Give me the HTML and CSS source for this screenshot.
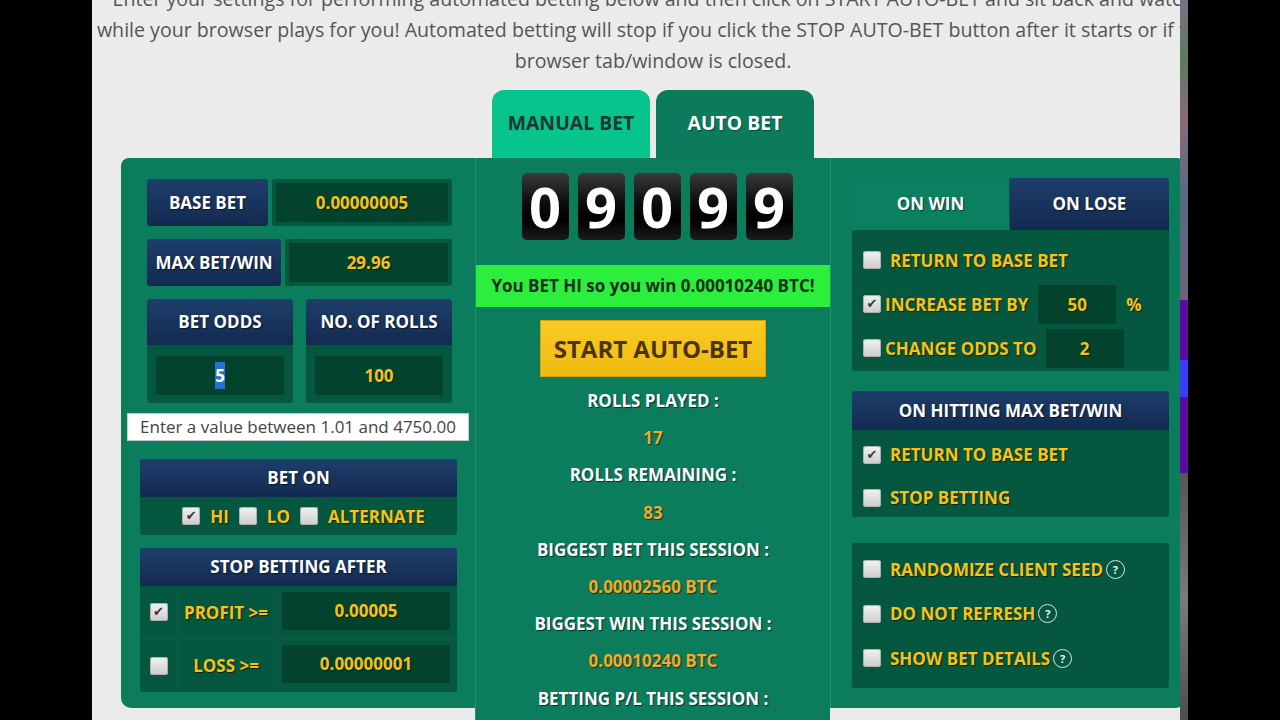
FILE: index.html
```html
<!DOCTYPE html>
<html>
<head>
    <title>Auto Bet</title>
    <link rel="stylesheet" href="styles.css">
</head>
<body>
    <div class="screen">
        <div class="frame">
            <div class="page">
                <p class="intro">
                    Enter your settings for performing automated betting below and then click on START AUTO-BET and sit back and watch<br>
                    while your browser plays for you! Automated betting will stop if you click the STOP AUTO-BET button after it starts or if the<br>
                    browser tab/window is closed.
                </p>

                <div class="tabs">
                    <div class="tab tab-manual">MANUAL BET</div>
                    <div class="tab tab-auto">AUTO BET</div>
                </div>

                <div class="board">
                    <!-- left: bet settings -->
                    <div class="col col-left">
                        <div class="field-row">
                            <div class="label-box base-label">BASE BET</div>
                            <div class="value-box"><div class="value">0.00000005</div></div>
                        </div>
                        <div class="field-row">
                            <div class="label-box max-label">MAX BET/WIN</div>
                            <div class="value-box"><div class="value">29.96</div></div>
                        </div>
                        <div class="field-row split-row">
                            <div class="split-box">
                                <div class="label-box">BET ODDS</div>
                                <div class="split-body"><div class="value"><span class="selected">5</span></div></div>
                            </div>
                            <div class="split-box">
                                <div class="label-box">NO. OF ROLLS</div>
                                <div class="split-body"><div class="value">100</div></div>
                            </div>
                        </div>
                        <div class="tooltip">Enter a value between 1.01 and 4750.00</div>

                        <div class="block bet-on">
                            <div class="block-head">BET ON</div>
                            <div class="bet-on-body">
                                <span class="check on"></span><span class="opt">HI</span>
                                <span class="check"></span><span class="opt">LO</span>
                                <span class="check"></span><span class="opt">ALTERNATE</span>
                            </div>
                        </div>

                        <div class="block stop-after">
                            <div class="block-head">STOP BETTING AFTER</div>
                            <div class="stop-row first">
                                <div class="stop-check"><span class="check on"></span></div>
                                <div class="stop-label">PROFIT &gt;=</div>
                                <div class="stop-input"><div class="value">0.00005</div></div>
                            </div>
                            <div class="stop-row">
                                <div class="stop-check"><span class="check"></span></div>
                                <div class="stop-label">LOSS &gt;=</div>
                                <div class="stop-input"><div class="value">0.00000001</div></div>
                            </div>
                        </div>
                    </div>

                    <!-- center: roll counter and stats -->
                    <div class="col col-center">
                        <div class="counter">
                            <span class="digit">0</span>
                            <span class="digit">9</span>
                            <span class="digit">0</span>
                            <span class="digit">9</span>
                            <span class="digit">9</span>
                        </div>
                        <div class="result">You BET HI so you win 0.00010240 BTC!</div>
                        <div class="start-btn">START AUTO-BET</div>
                        <div class="stats">
                            <div class="stat-label">ROLLS PLAYED :</div>
                            <div class="stat-value">17</div>
                            <div class="stat-label">ROLLS REMAINING :</div>
                            <div class="stat-value">83</div>
                            <div class="stat-label">BIGGEST BET THIS SESSION :</div>
                            <div class="stat-value">0.00002560 BTC</div>
                            <div class="stat-label">BIGGEST WIN THIS SESSION :</div>
                            <div class="stat-value">0.00010240 BTC</div>
                            <div class="stat-label">BETTING P/L THIS SESSION :</div>
                        </div>
                    </div>

                    <!-- right: win / lose behaviour -->
                    <div class="col col-right">
                        <div class="block win-lose">
                            <div class="wl-tabs">
                                <div class="wl-tab wl-active">ON WIN</div>
                                <div class="wl-tab">ON LOSE</div>
                            </div>
                            <div class="wl-body">
                                <div class="opt-row"><span class="check"></span><span class="opt">RETURN TO BASE BET</span></div>
                                <div class="opt-row tight"><span class="check on"></span><span class="opt">INCREASE BET BY</span><span class="small-input">50</span><span class="opt pct">%</span></div>
                                <div class="opt-row tight"><span class="check"></span><span class="opt">CHANGE ODDS TO</span><span class="small-input odds-input">2</span></div>
                            </div>
                        </div>

                        <div class="block max-hit">
                            <div class="block-head">ON HITTING MAX BET/WIN</div>
                            <div class="max-body">
                                <div class="opt-row short"><span class="check on"></span><span class="opt">RETURN TO BASE BET</span></div>
                                <div class="opt-row short"><span class="check"></span><span class="opt">STOP BETTING</span></div>
                            </div>
                        </div>

                        <div class="block extras">
                            <div class="opt-row"><span class="check"></span><span class="opt">RANDOMIZE CLIENT SEED</span><span class="help">?</span></div>
                            <div class="opt-row"><span class="check"></span><span class="opt">DO NOT REFRESH</span><span class="help">?</span></div>
                            <div class="opt-row"><span class="check"></span><span class="opt">SHOW BET DETAILS</span><span class="help">?</span></div>
                        </div>
                    </div>
                </div>
            </div>
        </div>
        <div class="noise"></div>
    </div>
</body>
</html>
```

FILE: styles.css
```css
body {
    margin: 0;
    padding: 0;
    background-color: #000000;
    font-family: "Open Sans", "Liberation Sans", sans-serif;
}

.screen {
    display: flex;
    height: 720px;
    padding-left: 92px;
    overflow: hidden;
}

.frame {
    width: 1088px;
    height: 720px;
    overflow: hidden;
    background-color: #ebebeb;
}

.page {
    width: 1122px;
    margin-top: -17px;
}

.intro {
    margin: 0;
    text-align: center;
    white-space: nowrap;
    font-size: 19.6px;
    line-height: 31px;
    color: #555555;
}

.tabs {
    display: flex;
    justify-content: center;
    gap: 6px;
    margin-top: 14px;
}

.tab {
    width: 158px;
    height: 68px;
    line-height: 66px;
    text-align: center;
    border-radius: 12px 12px 0 0;
    font-size: 19.4px;
    font-weight: bold;
}

.tab-manual {
    background-color: #07c48d;
    color: #173a2c;
}

.tab-auto {
    background-color: #0b7b5b;
    color: #ffffff;
    text-shadow: 1px 1px 1px rgba(0, 0, 0, 0.4);
}

.board {
    display: flex;
    align-items: flex-start;
    margin-left: 29px;
    width: 1064px;
}

.col {
    background-color: #0b7c5c;
    box-sizing: border-box;
}

.col-left {
    width: 354px;
    height: 550px;
    padding-top: 21px;
    border-radius: 8px 0 0 10px;
}

.col-center {
    width: 355px;
    height: 600px;
    padding-top: 15px;
    border-left: 1px solid #1f9372;
}

.col-right {
    width: 355px;
    height: 550px;
    padding: 20px 0 0 21px;
    border-left: 1px solid #1f9372;
    border-radius: 0 8px 10px 0;
}

/* boxes */
.label-box {
    background: linear-gradient(#1e3e6b, #132a50);
    color: #ffffff;
    font-size: 17px;
    font-weight: bold;
    text-align: center;
    text-shadow: 1px 1px 1px rgba(0, 0, 0, 0.6);
    border-radius: 3px;
}

.value {
    background-color: #03432e;
    color: #f4c11f;
    font-size: 17px;
    font-weight: bold;
    text-align: center;
    text-shadow: 1px 1px 1px rgba(0, 0, 0, 0.5);
    border-radius: 2px;
}

.field-row {
    display: flex;
    gap: 4px;
    width: 305px;
    height: 47px;
    margin-left: 26px;
    margin-bottom: 13px;
}

.field-row .label-box {
    line-height: 47px;
}

.base-label {
    width: 121px;
}

.max-label {
    width: 134px;
}

.value-box {
    flex: 1;
    padding: 4px;
    background-color: #06573f;
    border-radius: 3px;
}

.value-box .value {
    line-height: 39px;
}

.split-row {
    height: 104px;
    gap: 13px;
    margin-bottom: 10px;
}

.split-box {
    width: 146px;
    border-radius: 3px;
    overflow: hidden;
}

.split-box .label-box {
    height: 46px;
    line-height: 46px;
    border-radius: 3px 3px 0 0;
}

.split-body {
    height: 58px;
    padding: 11px 9px 8px;
    box-sizing: border-box;
    background-color: #06573f;
}

.split-body .value {
    line-height: 39px;
}

.selected {
    background-color: #2b6fd6;
    color: #ffffff;
    text-shadow: none;
    padding: 2px 0;
}

.tooltip {
    width: 342px;
    height: 28px;
    box-sizing: border-box;
    margin-left: 6px;
    margin-bottom: 18px;
    background-color: #ffffff;
    border: 1px solid #c9c9c9;
    font-size: 17px;
    line-height: 26px;
    text-align: center;
    color: #444444;
}

.block {
    width: 317px;
    background-color: #06573f;
    border-radius: 3px;
    overflow: hidden;
}

.col-left .block {
    margin-left: 19px;
    margin-bottom: 13px;
}

.block-head {
    height: 38px;
    line-height: 38px;
    background: linear-gradient(#1e3e6b, #132a50);
    color: #ffffff;
    font-size: 17px;
    font-weight: bold;
    text-align: center;
    text-shadow: 1px 1px 1px rgba(0, 0, 0, 0.6);
}

.check {
    display: inline-flex;
    align-items: center;
    justify-content: center;
    flex: none;
    width: 18px;
    height: 18px;
    border-radius: 3px;
    background: linear-gradient(#f2f2f2, #cdcdcd);
    box-shadow: inset 0 0 0 1px #b0b0b0;
    color: #3a3a3a;
    font-size: 13px;
    line-height: 18px;
}

.check.on::after {
    content: "\2714";
    font-family: "DejaVu Sans", sans-serif;
}

.opt {
    color: #f6c21c;
    font-size: 17px;
    font-weight: bold;
    text-shadow: 1px 1px 1px rgba(0, 0, 0, 0.6);
}

.bet-on-body {
    display: flex;
    align-items: center;
    justify-content: center;
    height: 38px;
    padding-left: 20px;
}

.bet-on-body .check {
    margin-right: 10px;
}

.bet-on-body .opt {
    margin-right: 10px;
}

.stop-row {
    display: flex;
    height: 54px;
    border-top: 1px solid #0a5f45;
    box-sizing: border-box;
}

.stop-row.first {
    height: 52px;
    border-top: none;
}

.stop-check {
    width: 37px;
    display: flex;
    align-items: center;
    justify-content: center;
    border-right: 1px solid #0a5f45;
}

.stop-label {
    width: 96px;
    display: flex;
    align-items: center;
    justify-content: center;
    color: #f6c21c;
    font-size: 17px;
    font-weight: bold;
    text-shadow: 1px 1px 1px rgba(0, 0, 0, 0.6);
    border-right: 1px solid #0a5f45;
}

.stop-input {
    flex: 1;
    padding: 6px 7px 8px;
}

.stop-input .value {
    line-height: 38px;
}

/* center column */
.counter {
    display: flex;
    justify-content: center;
    gap: 9px;
    margin-left: 8px;
}

.digit {
    width: 47px;
    height: 67px;
    border-radius: 5px;
    background: linear-gradient(#3b3b3b, #0c0c0c 45%, #000000 70%, #1c1c1c);
    color: #ffffff;
    font-size: 56px;
    font-weight: bold;
    line-height: 67px;
    text-align: center;
}

.result {
    margin-top: 25px;
    height: 42px;
    line-height: 42px;
    background-color: #2cee3d;
    color: #16301c;
    font-size: 17px;
    font-weight: bold;
    text-align: center;
}

.start-btn {
    width: 226px;
    height: 57px;
    margin: 13px auto 0;
    box-sizing: border-box;
    border: 1px solid #d9a00a;
    background: linear-gradient(#f9cc24, #f0b812);
    color: #4b3404;
    font-size: 24px;
    font-weight: bold;
    line-height: 55px;
    text-align: center;
}

.stats {
    margin-top: 5px;
    text-align: center;
    font-size: 17px;
    font-weight: bold;
    line-height: 37.2px;
    text-shadow: 1px 1px 1px rgba(0, 0, 0, 0.6);
}

.stat-label {
    color: #ffffff;
}

.stat-value {
    color: #f1ab2c;
}

/* right column */
.wl-tabs {
    display: flex;
    height: 52px;
}

.wl-tab {
    flex: 1;
    line-height: 52px;
    text-align: center;
    background: linear-gradient(#1e3e6b, #132a50);
    color: #ffffff;
    font-size: 17px;
    font-weight: bold;
    text-shadow: 1px 1px 1px rgba(0, 0, 0, 0.6);
}

.wl-active {
    flex: none;
    width: 157px;
    margin-right: 1px;
    background: #0b8060;
}

.wl-body {
    height: 141px;
    padding-top: 8px;
    box-sizing: border-box;
}

.opt-row {
    display: flex;
    align-items: center;
    gap: 9px;
    height: 44px;
    padding-left: 11px;
}

.opt-row.tight {
    gap: 4px;
}

.opt-row.short {
    height: 43px;
}

.small-input {
    width: 78px;
    height: 39px;
    margin-left: 6px;
    background-color: #03432e;
    color: #f4c11f;
    font-size: 17px;
    font-weight: bold;
    line-height: 39px;
    text-align: center;
    text-shadow: 1px 1px 1px rgba(0, 0, 0, 0.5);
}

.odds-input {
    margin-left: 5px;
}

.pct {
    margin-left: 6px;
}

.max-hit {
    margin-top: 20px;
    height: 126px;
}

.max-hit .block-head {
    height: 39px;
    line-height: 39px;
}

.max-body {
    padding-top: 3px;
}

.extras {
    margin-top: 26px;
    height: 145px;
    padding-top: 4px;
    box-sizing: border-box;
}

.extras .opt-row {
    height: 44.5px;
}

.help {
    display: inline-flex;
    align-items: center;
    justify-content: center;
    width: 17px;
    height: 17px;
    margin-left: -6px;
    border: 1.5px solid #cfe9df;
    border-radius: 50%;
    color: #eaf5f0;
    font-size: 11px;
    font-weight: bold;
}

.noise {
    width: 8px;
    height: 720px;
    background: linear-gradient(#7b6f86 0, #5d7a5f 60px, #8a6a7a 120px, #566a80 200px, #70607a 300px,
        #5e0aa0 300px, #5e0aa0 360px, #3c3cff 360px, #3c3cff 397px, #5e0aa0 397px, #5e0aa0 473px,
        #555555 473px, #7a7a7a 600px, #4d4d4d 720px);
}
```
